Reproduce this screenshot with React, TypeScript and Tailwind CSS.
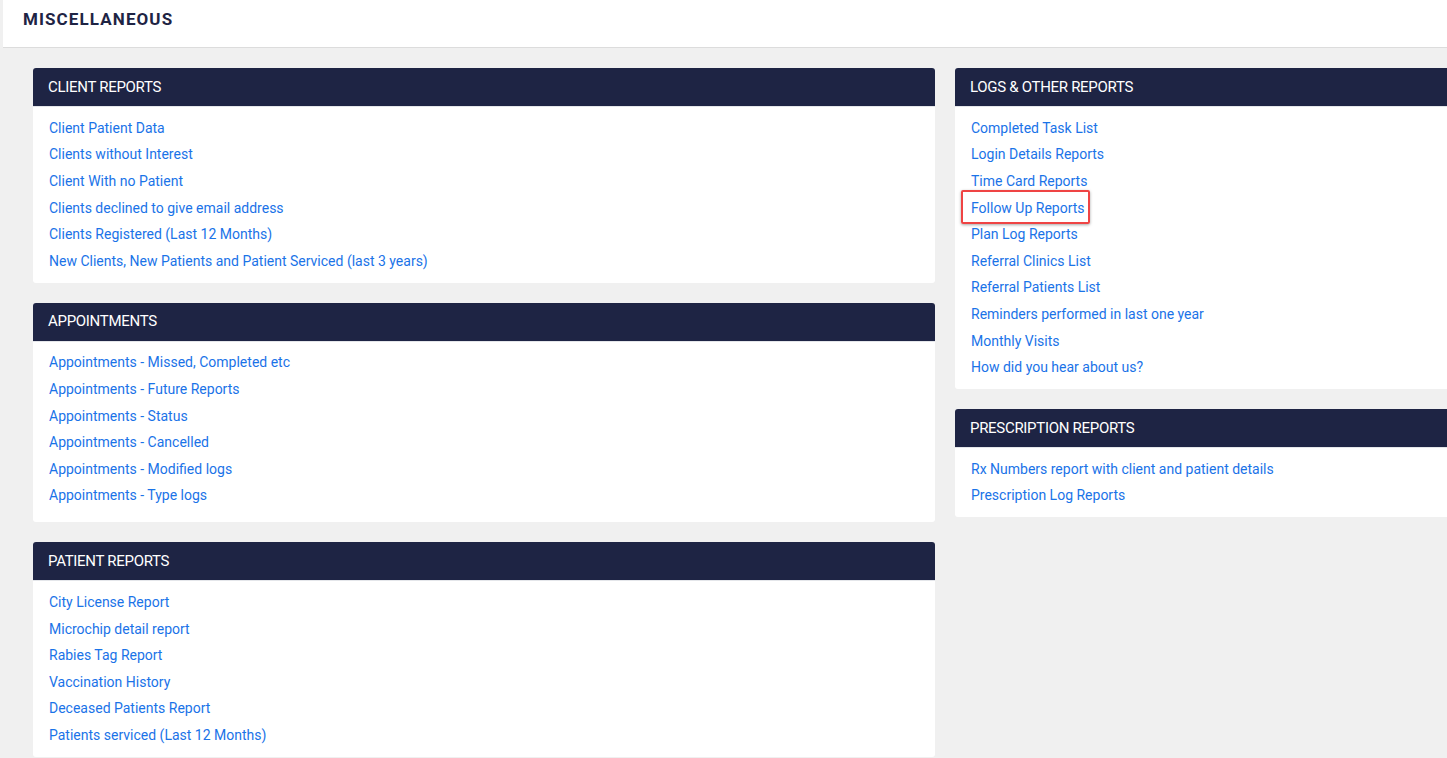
import React from 'react';

const leftSections = [
  {
    title: 'CLIENT REPORTS',
    items: [
      'Client Patient Data',
      'Clients without Interest',
      'Client With no Patient',
      'Clients declined to give email address',
      'Clients Registered (Last 12 Months)',
      'New Clients, New Patients and Patient Serviced (last 3 years)',
    ],
  },
  {
    title: 'APPOINTMENTS',
    items: [
      'Appointments - Missed, Completed etc',
      'Appointments - Future Reports',
      'Appointments - Status',
      'Appointments - Cancelled',
      'Appointments - Modified logs',
      'Appointments - Type logs',
    ],
    tall: true,
  },
  {
    title: 'PATIENT REPORTS',
    items: [
      'City License Report',
      'Microchip detail report',
      'Rabies Tag Report',
      'Vaccination History',
      'Deceased Patients Report',
      'Patients serviced (Last 12 Months)',
    ],
  },
];

const rightSections = [
  {
    title: 'LOGS & OTHER REPORTS',
    items: [
      'Completed Task List',
      'Login Details Reports',
      'Time Card Reports',
      'Follow Up Reports',
      'Plan Log Reports',
      'Referral Clinics List',
      'Referral Patients List',
      'Reminders performed in last one year',
      'Monthly Visits',
      'How did you hear about us?',
    ],
  },
  {
    title: 'PRESCRIPTION REPORTS',
    items: ['Rx Numbers report with client and patient details', 'Prescription Log Reports'],
  },
];

type Section = { title: string; items: string[]; tall?: boolean };

const ReportCard: React.FC<{ section: Section; highlight?: string }> = ({ section, highlight }) => (
  <div className="bg-white rounded-[3px] overflow-hidden">
    <div className="h-[39px] bg-[#1e2444] border-b border-[#e4e6ea] flex items-center px-[15px]">
      <h3 className="text-white text-[15px] tracking-[-0.3px]">{section.title}</h3>
    </div>
    <ul className={section.tall ? 'pt-2 pb-[13px] px-4' : 'py-2 px-4'}>
      {section.items.map((item) => (
        <li key={item} className="h-[26.6px] flex items-center">
          {item === highlight ? (
            <a className="relative text-[#1a73e8] text-[14px] cursor-pointer">
              {item}
              <span className="absolute -left-[10px] -right-[5px] -top-[8px] -bottom-[5px] border-2 border-[#ef4444] rounded-[2px] shadow-[0_1px_3px_rgba(0,0,0,0.35)]"></span>
            </a>
          ) : (
            <a className="text-[#1a73e8] text-[14px] cursor-pointer hover:underline">{item}</a>
          )}
        </li>
      ))}
    </ul>
  </div>
);

const App: React.FC = () => {
  return (
    <div className="min-h-screen w-full bg-[#f0f0f0] overflow-hidden font-['Roboto',sans-serif]">
      {/* Page title */}
      <div className="ml-[3px] h-[48px] bg-white border-b border-[#dcdcdc] px-5 pt-[9px]">
        <h1 className="text-[17px] leading-[20px] font-bold tracking-[1.1px] text-[#1e2444]">MISCELLANEOUS</h1>
      </div>

      <div className="flex gap-5 pt-5 pl-[33px]">
        <div className="w-[902px] shrink-0 flex flex-col gap-5">
          {leftSections.map((s) => (
            <ReportCard key={s.title} section={s} />
          ))}
        </div>
        <div className="w-[902px] shrink-0 flex flex-col gap-5">
          {rightSections.map((s) => (
            <ReportCard key={s.title} section={s} highlight="Follow Up Reports" />
          ))}
        </div>
      </div>
    </div>
  );
};

export default App;
